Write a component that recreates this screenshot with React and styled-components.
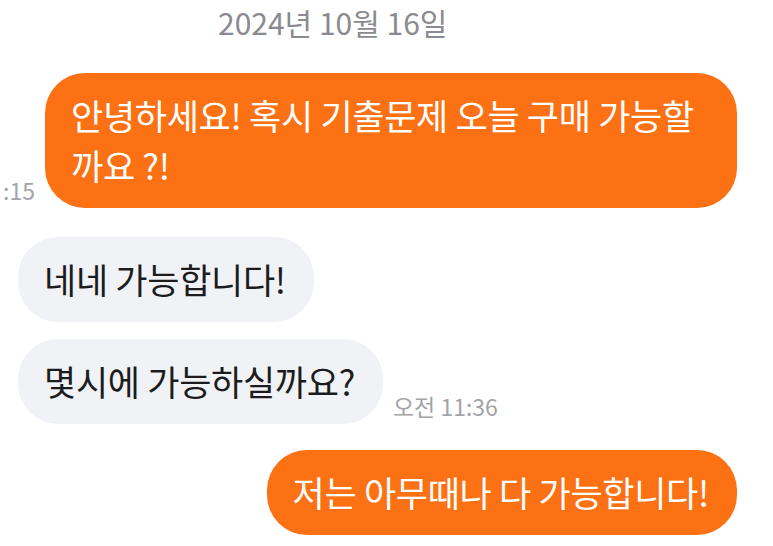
import styled, { createGlobalStyle } from "styled-components";

const GlobalStyle = createGlobalStyle`
  body {
    margin: 0;
    background: #fff;
    font-family: "Noto Sans CJK KR", "Noto Sans", sans-serif;
    overflow: hidden;
  }
`;

const messages = [
  { id: 1, mine: true, text: "안녕하세요! 혹시 기출문제 오늘 구매 가능할까요 ?!", time: ":15", gap: 0 },
  { id: 2, mine: false, text: "네네 가능합니다!", gap: 29 },
  { id: 3, mine: false, text: "몇시에 가능하실까요?", time: "오전 11:36", gap: 17 },
  { id: 4, mine: true, text: "저는 아무때나 다 가능합니다!", gap: 26 },
];

const App = () => {
  return (
    <>
      <GlobalStyle />
      <S.Wrapper>
        <S.DateLabel>2024년 10월 16일</S.DateLabel>
        <S.List>
          {messages.map((m) => (
            <S.Row key={m.id} $mine={m.mine} $gap={m.gap}>
              {m.mine && m.time && <S.Time>{m.time}</S.Time>}
              <S.Bubble $mine={m.mine}>{m.text}</S.Bubble>
              {!m.mine && m.time && <S.Time>{m.time}</S.Time>}
            </S.Row>
          ))}
        </S.List>
      </S.Wrapper>
    </>
  );
};

export default App;

const Wrapper = styled.div`
  width: 773px;
  height: 546px;
  box-sizing: border-box;
  padding: 0 36px 0 0;
  display: flex;
  flex-direction: column;
`;

const DateLabel = styled.div`
  margin-left: 218px;
  font-size: 30px;
  line-height: 44px;
  color: #8a8a90;
`;

const List = styled.div`
  display: flex;
  flex-direction: column;
  margin-top: 29px;
`;

const Row = styled.div`
  display: flex;
  align-items: flex-end;
  justify-content: ${({ $mine }) => ($mine ? "flex-end" : "flex-start")};
  gap: 10px;
  margin-top: ${({ $gap }) => $gap}px;
  padding-left: ${({ $mine }) => ($mine ? 0 : 18)}px;
`;

const Bubble = styled.div`
  max-width: 638px;
  padding: 17px 28px 18px 26px;
  border-radius: 40px;
  font-size: 35px;
  line-height: 50px;
  letter-spacing: -0.3px;
  background: ${({ $mine }) => ($mine ? "#fb7114" : "#f1f2f6")};
  color: ${({ $mine }) => ($mine ? "#fff" : "#1c1c1e")};
`;

const Time = styled.span`
  font-size: 23px;
  line-height: 28px;
  color: #a3a3a8;
  margin-bottom: 4px;
  white-space: nowrap;
`;

const S = {
  Wrapper,
  DateLabel,
  List,
  Row,
  Bubble,
  Time,
};
